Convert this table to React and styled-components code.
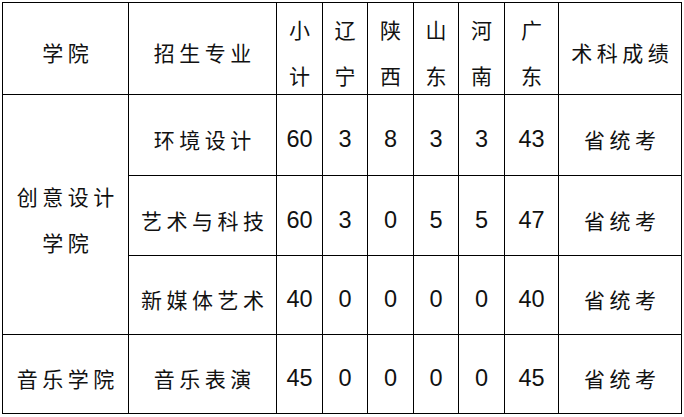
import React from 'react';
import styled, { createGlobalStyle } from 'styled-components';

const GlobalStyle = createGlobalStyle`
  html, body {
    margin: 0;
    padding: 0;
    background: #ffffff;
  }
`;

const Page = styled.div`
  padding: 2px 0 0 2px;
`;

const Grid = styled.div`
  display: grid;
  grid-template-columns: 125px 147px 45px 44px 45px 44px 45px 53px 122px;
  grid-template-rows: 91px 80px 79px 78px 78px;
  gap: 1px;
  padding: 1px;
  width: 678px;
  background: #000;
`;

const Cell = styled.div`
  background: #fff;
  display: flex;
  flex-direction: column;
  align-items: center;
  justify-content: center;
  padding-top: ${(p) => (p.$head ? 6 : 8)}px;
  box-sizing: border-box;
  grid-row: ${(p) => p.$rowSpan ? `span ${p.$rowSpan}` : 'auto'};
  color: #111;
`;

const Label = styled.span`
  font-family: "Noto Sans CJK SC", "Noto Sans", sans-serif;
  font-size: 21px;
  line-height: 46px;
  letter-spacing: 4.5px;
  padding-left: 4.5px;
  white-space: nowrap;
`;

const StackChar = styled.span`
  font-family: "Noto Sans CJK SC", "Noto Sans", sans-serif;
  font-size: 21px;
  line-height: 46px;
`;

const Num = styled.span`
  font-family: "Liberation Sans", Arial, sans-serif;
  font-size: 23.5px;
  line-height: 46px;
`;

const provinces = ['小计', '辽宁', '陕西', '山东', '河南', '广东'];

const majors = [
  { name: '环境设计', nums: [60, 3, 8, 3, 3, 43] },
  { name: '艺术与科技', nums: [60, 3, 0, 5, 5, 47] },
  { name: '新媒体艺术', nums: [40, 0, 0, 0, 0, 40] },
];

function Row({ name, nums }) {
  return (
    <>
      <Cell><Label>{name}</Label></Cell>
      {nums.map((n, i) => (
        <Cell key={i}><Num>{n}</Num></Cell>
      ))}
      <Cell><Label>省统考</Label></Cell>
    </>
  );
}

export default function App() {
  return (
    <Page>
      <GlobalStyle />
      <Grid>
        <Cell $head><Label>学院</Label></Cell>
        <Cell $head><Label>招生专业</Label></Cell>
        {provinces.map((p) => (
          <Cell $head key={p}>
            <StackChar>{p[0]}</StackChar>
            <StackChar>{p[1]}</StackChar>
          </Cell>
        ))}
        <Cell $head><Label>术科成绩</Label></Cell>

        <Cell $rowSpan={3}>
          <Label>创意设计</Label>
          <Label>学院</Label>
        </Cell>
        {majors.map((m) => (
          <Row key={m.name} {...m} />
        ))}

        <Cell><Label>音乐学院</Label></Cell>
        <Row name="音乐表演" nums={[45, 0, 0, 0, 0, 45]} />
      </Grid>
    </Page>
  );
}
